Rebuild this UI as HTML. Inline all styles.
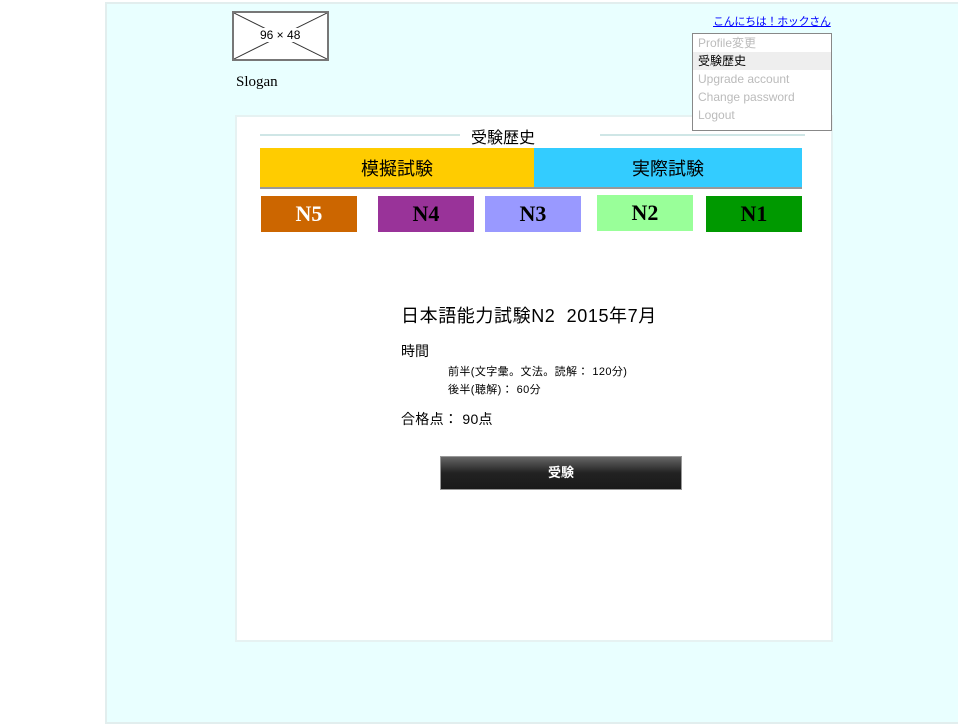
<!DOCTYPE html>
<html><head><meta charset="utf-8"><style>
*{margin:0;padding:0;box-sizing:border-box}
body{width:958px;height:724px;background:#fff;position:relative;overflow:hidden;font-family:"Liberation Sans","Noto Sans CJK JP",sans-serif}
.abs{position:absolute}
#outer{left:105px;top:2px;width:860px;height:722px;background:#e9ffff;border:2px solid #e2eeee}
#ph{left:232px;top:11px;width:97px;height:50px;background:#fff;border:2px solid #777}
#menu{left:692px;top:33px;width:140px;height:98px;background:#fff;border:1px solid #888;z-index:5}
#menu div{height:18px;line-height:18px;padding-left:5px;font-size:12px;color:#bbb}
#panel{left:235px;top:115px;width:598px;height:527px;background:#fff;border:2px solid #e6f2f2}
.lv{top:196px;width:96px;height:36px;font-family:"Liberation Serif",serif;font-weight:bold;font-size:22px;text-align:center;line-height:36px;color:#000}
</style></head><body>
<div id="outer" class="abs"></div>
<div id="ph" class="abs"><svg width="93" height="46" style="position:absolute;left:0;top:0"><line x1="0" y1="0" x2="93" y2="46" stroke="#333" stroke-width="1"/><line x1="93" y1="0" x2="0" y2="46" stroke="#333" stroke-width="1"/></svg><div class="abs" style="left:25px;top:15px;background:#fff;font-size:12px;padding:0 1px">96 × 48</div></div>
<div class="abs" style="left:236px;top:74px;font-family:'Liberation Serif',serif;font-size:15px">Slogan</div>
<div class="abs" style="left:713px;top:13px;font-size:11px;letter-spacing:-0.3px;color:#00f;text-decoration:underline">こんにちは！ホックさん</div>
<div id="menu" class="abs"><div>Profile変更</div><div style="background:#eee;color:#000">受験歴史</div><div>Upgrade account</div><div>Change password</div><div>Logout</div></div>
<div id="panel" class="abs"></div>
<div class="abs" style="left:260px;top:134px;width:200px;height:2px;background:#cfe6e6"></div>
<div class="abs" style="left:600px;top:134px;width:205px;height:2px;background:#cfe6e6"></div>
<div class="abs" style="left:471px;top:124px;font-size:16px">受験歴史</div>
<div class="abs" style="left:260px;top:148px;width:274px;height:40px;background:#ffcc00;text-align:center;line-height:42px;font-size:18px">模擬試験</div>
<div class="abs" style="left:534px;top:148px;width:268px;height:40px;background:#33ccff;text-align:center;line-height:42px;font-size:18px">実際試験</div>
<div class="abs" style="left:260px;top:187px;width:542px;height:2px;background:#999"></div>
<div class="abs lv" style="left:261px;background:#cc6600;color:#fff">N5</div>
<div class="abs lv" style="left:378px;background:#993399">N4</div>
<div class="abs lv" style="left:485px;background:#9999ff">N3</div>
<div class="abs lv" style="left:597px;top:195px;background:#99ff99">N2</div>
<div class="abs lv" style="left:706px;background:#009900">N1</div>
<div class="abs" style="left:401px;top:302px;font-size:18px;letter-spacing:0.6px">日本語能力試験N2&nbsp; 2015年7月</div>
<div class="abs" style="left:401px;top:341px;font-size:14px">時間</div>
<div class="abs" style="left:448px;top:363px;font-size:11px;line-height:18px;letter-spacing:0.4px">前半(文字彙。文法。読解： 120分)<br>後半(聴解)： 60分</div>
<div class="abs" style="left:401px;top:409px;font-size:14px;letter-spacing:0.3px">合格点： 90点</div>
<div class="abs" style="left:440px;top:456px;width:242px;height:34px;border:1px solid #999;background:linear-gradient(#666,#222 50%,#1a1a1a);color:#fff;font-weight:bold;font-size:13px;text-align:center;line-height:32px">受験</div>
</body></html>
